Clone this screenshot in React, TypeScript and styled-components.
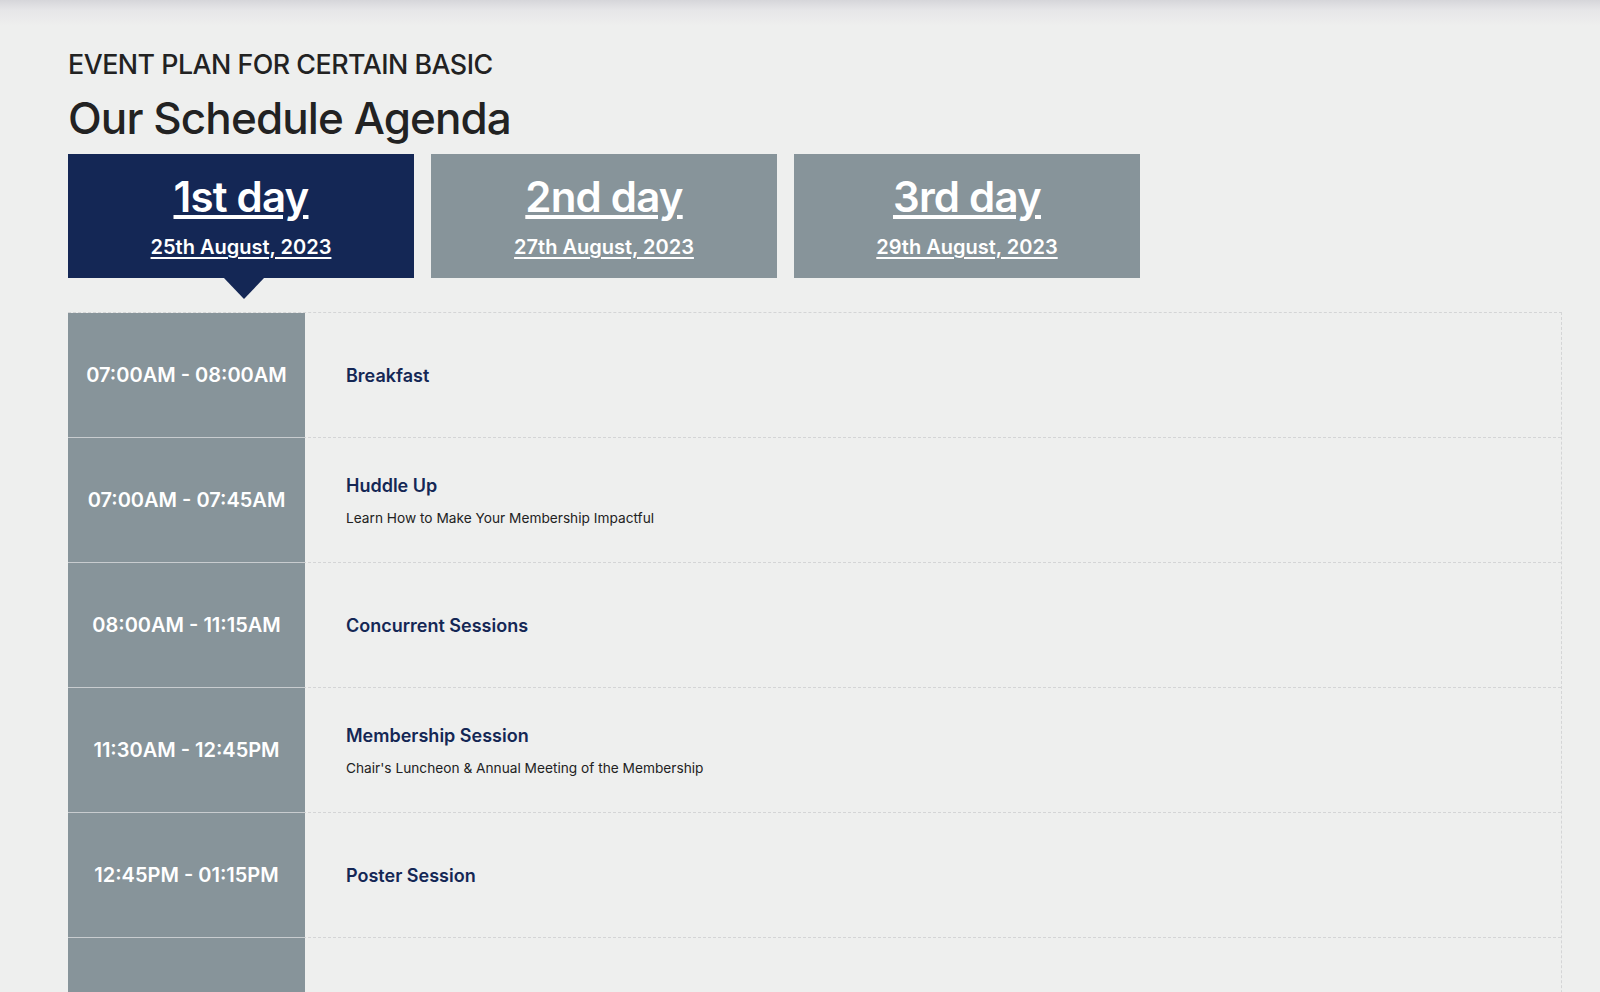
import styled, { createGlobalStyle } from 'styled-components';

const GlobalStyle = createGlobalStyle`
    html, body {
        margin: 0;
        padding: 0;
        background: #eeefee;
    }
    body {
        font-family: Inter, "Noto Sans", sans-serif;
        color: #222;
    }
`

const Page = styled.div`
    min-height: 992px;
    background: linear-gradient(to bottom, #d6d6da 0px, #e6e6e8 10px, #eeefee 26px, #eeefee 100%);
    padding: 48px 38px 0 68px;
    box-sizing: border-box;
`

const Eyebrow = styled.div`
    font-size: 26.8px;
    font-weight: 500;
    letter-spacing: -0.5px;
    line-height: 33px;
    color: #222;
`

const Title = styled.h1`
    margin: 10px 0 0;
    font-size: 44px;
    font-weight: 500;
    letter-spacing: -0.9px;
    line-height: 54px;
    color: #222;
`

const Tabs = styled.div`
    display: flex;
    gap: 17px;
    margin-top: 9px;
`

const Tab = styled.a<{ $active?: boolean }>`
    position: relative;
    display: flex;
    flex-direction: column;
    align-items: center;
    width: 346px;
    height: 124px;
    box-sizing: border-box;
    padding-top: 18px;
    background: ${p => (p.$active ? '#142755' : '#87949a')};
    color: #fff;
    text-decoration: underline;
    text-underline-offset: 3px;
    cursor: pointer;

    &::after {
        content: '';
        display: ${p => (p.$active ? 'block' : 'none')};
        position: absolute;
        left: calc(50% - 18px);
        bottom: -21px;
        width: 0;
        height: 0;
        border-left: 21px solid transparent;
        border-right: 21px solid transparent;
        border-top: 22px solid #142755;
    }
`

const TabDay = styled.span`
    font-size: 42px;
    font-weight: 600;
    letter-spacing: -0.8px;
    line-height: 50px;
`

const TabDate = styled.span`
    margin-top: 12px;
    font-size: 20px;
    font-weight: 600;
    line-height: 26px;
`

const Table = styled.div`
    margin-top: 34px;
    border-top: 1px dashed #d4d5d6;
    border-right: 1px dashed #d4d5d6;
`

const Row = styled.div`
    display: flex;
    height: 125px;
    box-sizing: border-box;
    border-bottom: 1px dashed #d4d5d6;
`

const Time = styled.div`
    display: flex;
    align-items: center;
    justify-content: center;
    width: 237px;
    flex-shrink: 0;
    margin-bottom: -1px;
    border-bottom: 1px solid #c8cccf;
    background: #87949a;
    color: #fff;
    font-size: 20px;
    font-weight: 600;
`

const Details = styled.div`
    display: flex;
    flex-direction: column;
    justify-content: center;
    gap: 14px;
    padding-left: 41px;
`

const EventName = styled.div`
    font-size: 18px;
    font-weight: 600;
    color: #142755;
`

const EventNote = styled.div`
    font-size: 13.7px;
    color: #222;
`

const days = [
    { day: '1st day', date: '25th August, 2023' },
    { day: '2nd day', date: '27th August, 2023' },
    { day: '3rd day', date: '29th August, 2023' },
]

const agenda = [
    { time: '07:00AM - 08:00AM', name: 'Breakfast' },
    { time: '07:00AM - 07:45AM', name: 'Huddle Up', note: 'Learn How to Make Your Membership Impactful' },
    { time: '08:00AM - 11:15AM', name: 'Concurrent Sessions' },
    { time: '11:30AM - 12:45PM', name: 'Membership Session', note: "Chair's Luncheon & Annual Meeting of the Membership" },
    { time: '12:45PM - 01:15PM', name: 'Poster Session' },
    { time: '01:15PM - 02:30PM', name: 'Lunch' },
]

export default function App() {
    return (
        <>
            <GlobalStyle />
            <Page>
                <Eyebrow>EVENT PLAN FOR CERTAIN BASIC</Eyebrow>
                <Title>Our Schedule Agenda</Title>
                <Tabs>
                    {days.map((d, i) => (
                        <Tab key={i} $active={i === 0}>
                            <TabDay>{d.day}</TabDay>
                            <TabDate>{d.date}</TabDate>
                        </Tab>
                    ))}
                </Tabs>
                <Table>
                    {agenda.map((item, i) => (
                        <Row key={i}>
                            <Time>{item.time}</Time>
                            <Details>
                                <EventName>{item.name}</EventName>
                                {item.note && <EventNote>{item.note}</EventNote>}
                            </Details>
                        </Row>
                    ))}
                </Table>
            </Page>
        </>
    )
}
